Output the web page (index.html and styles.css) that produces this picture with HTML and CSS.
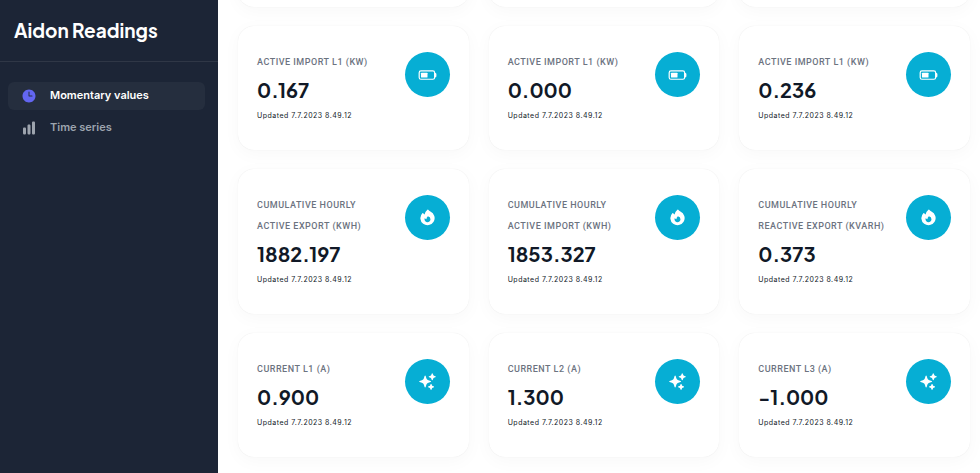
FILE: index.html
```html
<!DOCTYPE html>
<html lang="en">
<head>
<meta charset="utf-8">
<meta name="viewport" content="width=device-width, initial-scale=1">
<title>Aidon Readings</title>
<link rel="stylesheet" href="styles.css">
</head>
<body>
<svg class="sprite" aria-hidden="true">
  <symbol id="battery" viewBox="0 0 24 24">
    <path d="M4.5 9.75a.75.75 0 0 0-.75.75V15c0 .414.336.75.75.75h6.75A.75.75 0 0 0 12 15v-4.5a.75.75 0 0 0-.75-.75H4.5Z"/>
    <path fill-rule="evenodd" d="M3.75 6.75a3 3 0 0 0-3 3v6a3 3 0 0 0 3 3h15a3 3 0 0 0 3-3v-.037c.856-.174 1.5-.93 1.5-1.838v-2.25c0-.907-.644-1.664-1.5-1.837V9.75a3 3 0 0 0-3-3h-15Zm15 1.5a1.5 1.5 0 0 1 1.5 1.5v6a1.5 1.5 0 0 1-1.5 1.5h-15a1.5 1.5 0 0 1-1.5-1.5v-6a1.5 1.5 0 0 1 1.5-1.5h15Z"/>
  </symbol>
  <symbol id="fire" viewBox="0 0 24 24">
    <path fill-rule="evenodd" d="M12.963 2.286a.75.75 0 0 0-1.071-.136 9.742 9.742 0 0 0-3.539 6.177A7.547 7.547 0 0 1 6.648 6.61a.75.75 0 0 0-1.152-.082A9 9 0 1 0 15.68 4.534a7.46 7.46 0 0 1-2.717-2.248ZM15.75 14.25a3.75 3.75 0 1 1-7.313-1.172c.628.465 1.35.81 2.133 1a5.99 5.99 0 0 1 1.925-3.545 3.75 3.75 0 0 1 3.255 3.717Z"/>
  </symbol>
  <symbol id="sparkles" viewBox="0 0 24 24">
    <path fill-rule="evenodd" d="M9 4.5a.75.75 0 0 1 .721.544l.813 2.846a3.75 3.75 0 0 0 2.576 2.576l2.846.813a.75.75 0 0 1 0 1.442l-2.846.813a3.75 3.75 0 0 0-2.576 2.576l-.813 2.846a.75.75 0 0 1-1.442 0l-.813-2.846a3.75 3.75 0 0 0-2.576-2.576l-2.846-.813a.75.75 0 0 1 0-1.442l2.846-.813A3.75 3.75 0 0 0 7.466 7.89l.813-2.846A.75.75 0 0 1 9 4.5ZM18 1.5a.75.75 0 0 1 .728.568l.258 1.036c.236.94.97 1.674 1.91 1.91l1.036.258a.75.75 0 0 1 0 1.456l-1.036.258c-.94.236-1.674.97-1.91 1.91l-.258 1.036a.75.75 0 0 1-1.456 0l-.258-1.036a2.625 2.625 0 0 0-1.91-1.91l-1.036-.258a.75.75 0 0 1 0-1.456l1.036-.258a2.625 2.625 0 0 0 1.91-1.91l.258-1.036A.75.75 0 0 1 18 1.5ZM16.5 15a.75.75 0 0 1 .712.513l.394 1.183c.15.447.5.799.948.948l1.183.395a.75.75 0 0 1 0 1.422l-1.183.395c-.447.15-.799.5-.948.948l-.395 1.183a.75.75 0 0 1-1.422 0l-.395-1.183a1.5 1.5 0 0 0-.948-.948l-1.183-.395a.75.75 0 0 1 0-1.422l1.183-.395c.447-.15.799-.5.948-.948l.395-1.183A.75.75 0 0 1 16.5 15Z"/>
  </symbol>
  <symbol id="clock" viewBox="0 0 24 24">
    <path fill-rule="evenodd" d="M12 2.25c-5.385 0-9.75 4.365-9.75 9.75s4.365 9.75 9.75 9.75 9.75-4.365 9.75-9.75S17.385 2.25 12 2.25ZM12.75 6a.75.75 0 0 0-1.5 0v6c0 .414.336.75.75.75h4.5a.75.75 0 0 0 0-1.5h-3.75V6Z"/>
  </symbol>
  <symbol id="bars" viewBox="0 0 24 24">
    <path d="M18.375 2.25c-1.035 0-1.875.84-1.875 1.875v15.75c0 1.035.84 1.875 1.875 1.875h.75c1.035 0 1.875-.84 1.875-1.875V4.125c0-1.036-.84-1.875-1.875-1.875h-.75ZM9.75 8.625c0-1.036.84-1.875 1.875-1.875h.75c1.036 0 1.875.84 1.875 1.875v11.25c0 1.035-.84 1.875-1.875 1.875h-.75a1.875 1.875 0 0 1-1.875-1.875V8.625ZM3 13.125c0-1.036.84-1.875 1.875-1.875h.75c1.036 0 1.875.84 1.875 1.875v6.75c0 1.035-.84 1.875-1.875 1.875h-.75A1.875 1.875 0 0 1 3 19.875v-6.75Z"/>
  </symbol>
</svg>
<div class="app">
  <aside class="sidebar">
    <h1 class="brand">Aidon Readings</h1>
    <nav class="menu">
      <a class="link link-active" href="#momentary"><svg class="link-icon" aria-hidden="true"><use href="#clock"/></svg><span class="link-text">Momentary values</span></a>
      <a class="link" href="#series"><svg class="link-icon" aria-hidden="true"><use href="#bars"/></svg><span class="link-text">Time series</span></a>
    </nav>
  </aside>
  <main class="content">
    <div class="grid">
      <div class="card card-scrolled"></div>
      <div class="card card-scrolled"></div>
      <div class="card card-scrolled"></div>
      <article class="card"><div><h2 class="label">Active import L1 (kW)</h2><p class="value">0.167</p><p class="updated">Updated 7.7.2023 8.49.12</p></div><span class="badge"><svg class="icon" aria-hidden="true"><use href="#battery"/></svg></span></article>
      <article class="card"><div><h2 class="label">Active import L1 (kW)</h2><p class="value">0.000</p><p class="updated">Updated 7.7.2023 8.49.12</p></div><span class="badge"><svg class="icon" aria-hidden="true"><use href="#battery"/></svg></span></article>
      <article class="card"><div><h2 class="label">Active import L1 (kW)</h2><p class="value">0.236</p><p class="updated">Updated 7.7.2023 8.49.12</p></div><span class="badge"><svg class="icon" aria-hidden="true"><use href="#battery"/></svg></span></article>
      <article class="card"><div><h2 class="label">Cumulative hourly active export (kWh)</h2><p class="value">1882.197</p><p class="updated">Updated 7.7.2023 8.49.12</p></div><span class="badge"><svg class="icon" aria-hidden="true"><use href="#fire"/></svg></span></article>
      <article class="card"><div><h2 class="label">Cumulative hourly active import (kWh)</h2><p class="value">1853.327</p><p class="updated">Updated 7.7.2023 8.49.12</p></div><span class="badge"><svg class="icon" aria-hidden="true"><use href="#fire"/></svg></span></article>
      <article class="card"><div><h2 class="label">Cumulative hourly reactive export (kvarh)</h2><p class="value">0.373</p><p class="updated">Updated 7.7.2023 8.49.12</p></div><span class="badge"><svg class="icon" aria-hidden="true"><use href="#fire"/></svg></span></article>
      <article class="card"><div><h2 class="label">Current L1 (A)</h2><p class="value">0.900</p><p class="updated">Updated 7.7.2023 8.49.12</p></div><span class="badge"><svg class="icon" aria-hidden="true"><use href="#sparkles"/></svg></span></article>
      <article class="card"><div><h2 class="label">Current L2 (A)</h2><p class="value">1.300</p><p class="updated">Updated 7.7.2023 8.49.12</p></div><span class="badge"><svg class="icon" aria-hidden="true"><use href="#sparkles"/></svg></span></article>
      <article class="card"><div><h2 class="label">Current L3 (A)</h2><p class="value">-1.000</p><p class="updated">Updated 7.7.2023 8.49.12</p></div><span class="badge"><svg class="icon" aria-hidden="true"><use href="#sparkles"/></svg></span></article>
    </div>
  </main>
</div>
</body>
</html>
```
FILE: styles.css
```css
* {
  box-sizing: border-box;
}

body {
  margin: 0;
  background: #fff;
  color: #111927;
  font-family: Inter, "Liberation Sans", sans-serif;
}

h1,
h2,
p {
  margin: 0;
}

.sprite {
  display: none;
}

.app {
  display: flex;
  height: 100vh;
  overflow: hidden;
}

.sidebar {
  flex: 0 0 218px;
  background: #1c2536;
  color: #fff;
}

.brand {
  padding: 16px 14px;
  border-bottom: 1px solid #2f3746;
  font-family: "Plus Jakarta Sans", Inter, sans-serif;
  font-size: 19px;
  font-weight: 700;
  line-height: 29px;
}

.menu {
  display: flex;
  flex-direction: column;
  gap: 4px;
  padding: 20px 13px 20px 8px;
}

.link {
  display: flex;
  align-items: center;
  gap: 13px;
  height: 28px;
  padding: 0 13px;
  border-radius: 6px;
  color: #9da4ae;
  font-size: 11px;
  font-weight: 600;
  text-decoration: none;
}

.link-text {
  padding-bottom: 2px;
}

.link-active {
  background: #252e3e;
  color: #fff;
}

.link-icon {
  width: 16px;
  height: 16px;
  fill: currentColor;
}

.link-active .link-icon {
  fill: #6366f1;
}

.content {
  flex: 1;
  min-width: 0;
  padding: 0 10px 0 20px;
}

.grid {
  display: grid;
  grid-template-columns: repeat(3, minmax(0, 1fr));
  gap: 19px 20px;
}

.card {
  display: flex;
  justify-content: space-between;
  gap: 19px;
  padding: 26px 19px 24px;
  border-radius: 16px;
  background: #fff;
  box-shadow: 0 4px 18px rgba(0, 0, 0, 0.03), 0 0 1px rgba(0, 0, 0, 0.1);
}

.card-scrolled {
  height: 124px;
  margin-top: -117px;
}

.label {
  color: #6c737f;
  font-family: Roboto, Inter, sans-serif;
  font-size: 9px;
  font-weight: 500;
  letter-spacing: 0.5px;
  line-height: 21px;
  text-transform: uppercase;
}

.value {
  margin: 2px 0;
  font-family: "Plus Jakarta Sans", Inter, sans-serif;
  font-size: 20px;
  font-weight: 700;
  line-height: 29px;
}

.updated {
  font-size: 7px;
  font-weight: 400;
  letter-spacing: 0.5px;
  line-height: 20px;
}

.badge {
  display: flex;
  flex: none;
  align-items: center;
  justify-content: center;
  width: 45px;
  height: 45px;
  border-radius: 50%;
  background: #06aed4;
}

.icon {
  width: 19px;
  height: 19px;
  fill: #fff;
}
```
